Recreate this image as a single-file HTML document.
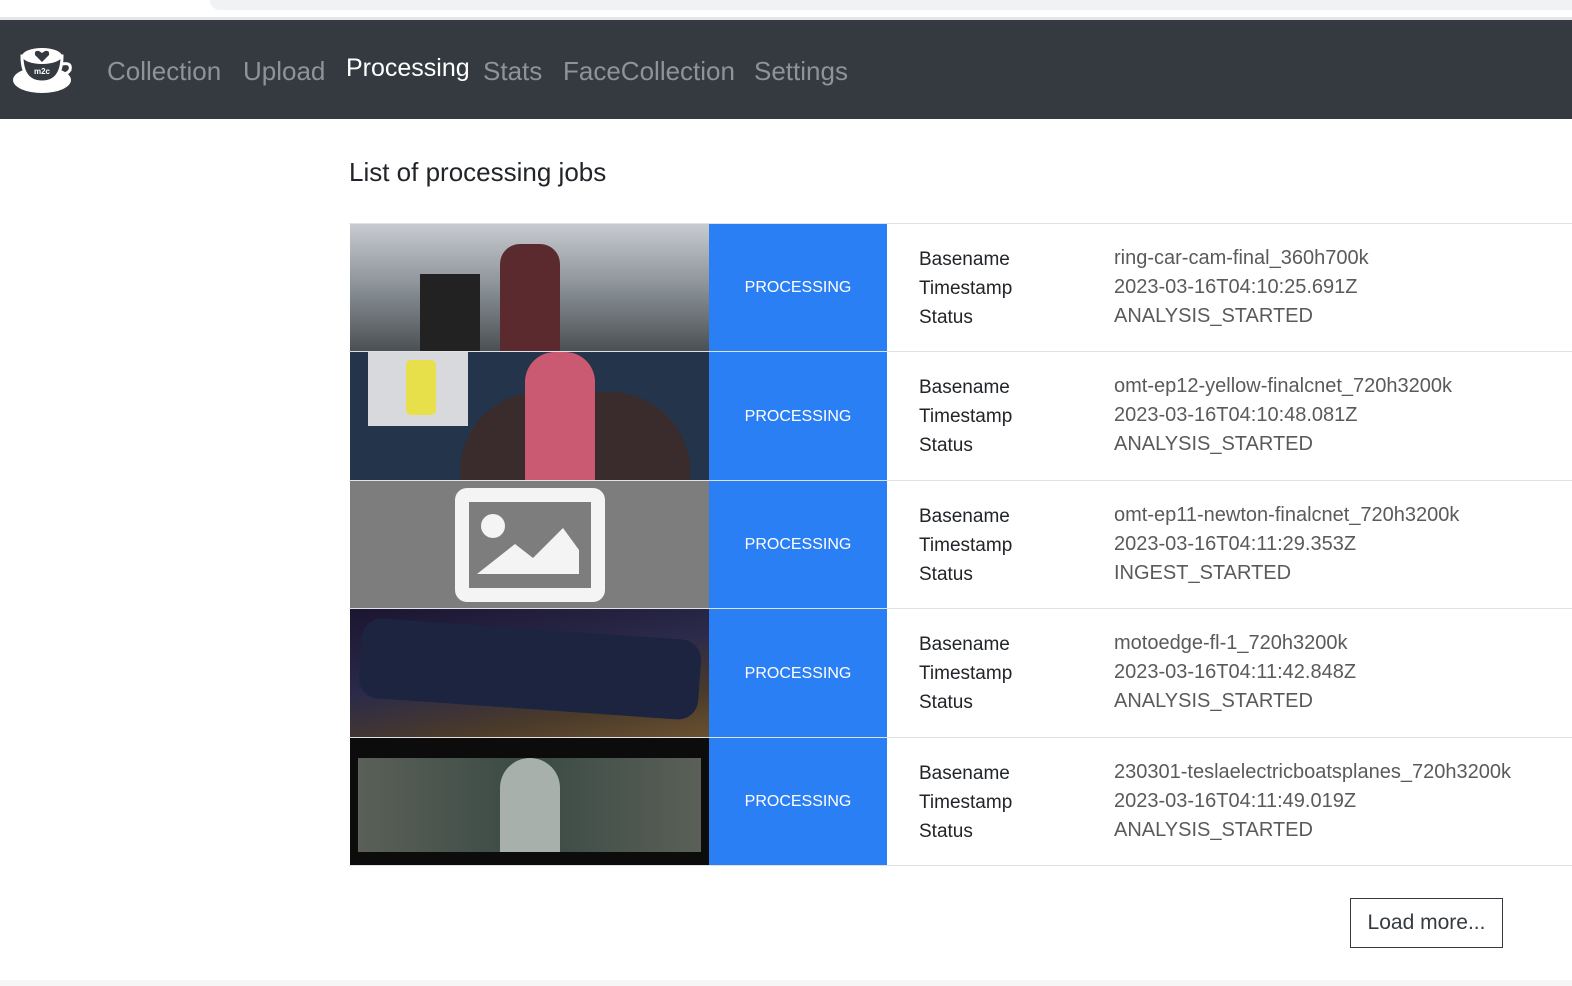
<!DOCTYPE html>
<html><head><style>
body{margin:0;width:1572px;height:986px;background:#fff;font-family:"Liberation Sans",sans-serif;position:relative;overflow:hidden}
.top{position:absolute;left:210px;top:0;right:0;height:10px;background:#f1f2f4;border-bottom-left-radius:12px}
.topline{position:absolute;left:0;right:0;top:17px;height:3px;background:#e4e5e7}
nav{position:absolute;left:0;right:0;top:20px;height:99px;background:#343a40}
nav a{position:absolute;top:36px;font-size:26px;color:#8f9396;text-decoration:none}
h1{position:absolute;left:349px;top:157px;margin:0;font-weight:normal;font-size:26px;color:#212529}
.row{position:absolute;left:349px;right:0;border-top:1px solid #dee2e6}
.th{position:absolute;left:1px;top:0;width:359px;height:100%}
.st{position:absolute;left:360px;top:0;width:178px;height:100%;background:#2a7ff4;color:#fff;font-size:16px;text-align:center;display:flex;align-items:center;justify-content:center}
.k{position:absolute;left:570px;font-size:19px;color:#212529;line-height:29px;top:21px}
.v{position:absolute;left:765px;font-size:20px;color:#5a5a5a;line-height:29px;top:20px}
.btn{position:absolute;left:1350px;top:898px;width:153px;height:50px;border:1px solid #343a40;box-sizing:border-box;font-size:21px;color:#343a40;text-align:center;line-height:48px}
</style></head><body>
<div class="top"></div><div class="topline"></div>
<nav>
<svg style="position:absolute;left:12px;top:22px" width="62" height="52" viewBox="0 0 62 52">
<ellipse cx="30" cy="38" rx="29" ry="13" fill="#fff"/>
<path d="M10 14 Q10 40 30 40 Q50 40 50 14 Z" fill="#343a40" stroke="#fff" stroke-width="3"/>
<ellipse cx="30" cy="14" rx="20" ry="8" fill="#fff"/>
<path d="M30 20 L23 13 Q22 8 27 9 L30 11 L33 9 Q38 8 37 13 Z" fill="#343a40"/>
<path d="M50 22 Q60 20 58 28 Q55 33 46 33" fill="none" stroke="#fff" stroke-width="3"/>
<text x="30" y="32" font-size="8" font-weight="bold" fill="#fff" text-anchor="middle" font-family="Liberation Sans">m2c</text>
</svg>
<a style="left:107px">Collection</a><a style="left:243px">Upload</a><a style="left:346px;color:#fff;top:34px;font-size:25px">Processing</a><a style="left:483px">Stats</a><a style="left:563px">FaceCollection</a><a style="left:754px">Settings</a>
</nav>
<h1>List of processing jobs</h1>

<div class="row" style="top:223px;height:128px"><div class="th" style="background:linear-gradient(180deg,#c8cbd0 0%,#8f969c 45%,#4a4f52 100%)"><div style="position:absolute;left:150px;top:20px;width:60px;height:108px;background:#5a2a2e;border-radius:20px 20px 0 0"></div><div style="position:absolute;left:70px;top:50px;width:60px;height:78px;background:#222"></div></div><div class="st">PROCESSING</div>
<div class="k">Basename<br>Timestamp<br>Status</div><div class="v">ring-car-cam-final_360h700k<br>2023-03-16T04:10:25.691Z<br>ANALYSIS_STARTED</div></div>

<div class="row" style="top:351px;height:129px"><div class="th" style="background:#24344a"><div style="position:absolute;left:18px;top:0;width:100px;height:74px;background:#d7d9dc"></div><div style="position:absolute;left:56px;top:8px;width:30px;height:55px;background:#e8e04a;border-radius:5px"></div><div style="position:absolute;left:110px;top:40px;width:230px;height:89px;background:#3a2b2c;border-radius:80px 80px 0 0"></div><div style="position:absolute;left:175px;top:0;width:70px;height:129px;background:#c95a72;border-radius:30px 30px 0 0"></div></div><div class="st">PROCESSING</div>
<div class="k">Basename<br>Timestamp<br>Status</div><div class="v">omt-ep12-yellow-finalcnet_720h3200k<br>2023-03-16T04:10:48.081Z<br>ANALYSIS_STARTED</div></div>

<div class="row" style="top:480px;height:128px"><div class="th" style="background:#7d7d7d"><svg style="position:absolute;left:105px;top:7px" width="150" height="114" viewBox="0 0 150 114"><rect x="0" y="0" width="150" height="114" rx="12" fill="#f4f4f4"/><rect x="14" y="14" width="122" height="86" fill="#7d7d7d"/><circle cx="38" cy="38" r="12" fill="#f4f4f4"/><path d="M22 86 L60 56 L78 70 L108 40 L124 62 L124 86 Z" fill="#f4f4f4"/></svg></div><div class="st">PROCESSING</div>
<div class="k">Basename<br>Timestamp<br>Status</div><div class="v">omt-ep11-newton-finalcnet_720h3200k<br>2023-03-16T04:11:29.353Z<br>INGEST_STARTED</div></div>

<div class="row" style="top:608px;height:129px"><div class="th" style="background:linear-gradient(170deg,#1b1530 0%,#2b2a4a 45%,#4a3a2a 75%,#6a5030 100%)"><div style="position:absolute;left:10px;top:20px;width:340px;height:80px;background:#1c2440;border-radius:20px;transform:rotate(4deg)"></div></div><div class="st">PROCESSING</div>
<div class="k">Basename<br>Timestamp<br>Status</div><div class="v">motoedge-fl-1_720h3200k<br>2023-03-16T04:11:42.848Z<br>ANALYSIS_STARTED</div></div>

<div class="row" style="top:737px;height:128px"><div class="th" style="background:#0c0c0c"><div style="position:absolute;left:8px;top:20px;width:343px;height:94px;background:linear-gradient(90deg,#5a6058,#3a4a44,#5a6058)"></div><div style="position:absolute;left:150px;top:20px;width:60px;height:94px;background:#a8b0ac;border-radius:30px 30px 0 0"></div></div><div class="st">PROCESSING</div>
<div class="k">Basename<br>Timestamp<br>Status</div><div class="v">230301-teslaelectricboatsplanes_720h3200k<br>2023-03-16T04:11:49.019Z<br>ANALYSIS_STARTED</div></div>
<div style="position:absolute;left:349px;right:0;top:865px;border-top:1px solid #dee2e6"></div>

<div class="btn">Load more...</div>
<div style="position:absolute;left:0;right:0;top:980px;height:6px;background:#f6f6f7"></div>
</body></html>
